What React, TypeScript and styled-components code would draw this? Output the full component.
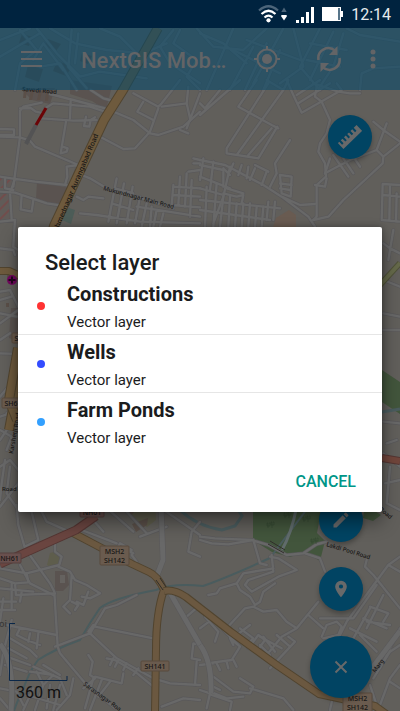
import React from "react";
import styled, { createGlobalStyle } from "styled-components";

const GlobalStyle = createGlobalStyle`
  * { box-sizing: border-box; }
  body { margin: 0; background: #615f5b; font-family: Roboto, "Liberation Sans", sans-serif; }
  button { font-family: inherit; cursor: pointer; }
`;

const Screen = styled.div`
  position: relative;
  display: flex;
  flex-direction: column;
  min-height: 100vh;
  overflow: hidden;
`;

const MapCanvas = styled.svg`
  position: absolute;
  inset: 0;
  width: 100%;
  height: 100%;
`;

const StatusBar = styled.div`
  position: relative;
  display: flex;
  align-items: center;
  justify-content: flex-end;
  gap: 8px;
  height: 28px;
  padding-right: 9px;
  background: #00233f;
  color: #e6eaed;
  font-size: 16px;
  line-height: 28px;

  time { padding-top: 2px; }
`;

const AppBar = styled.header`
  position: relative;
  display: flex;
  align-items: center;
  height: 62px;
  padding: 0 14px;
  background: rgba(3, 74, 107, 0.56);
  color: #636466;
`;

const BarTitle = styled.h1`
  flex: 1;
  min-width: 0;
  margin: 3px 0 0 33px;
  white-space: nowrap;
  font-size: 22px;
  line-height: 32px;
  font-weight: 500;
`;

const BarActions = styled.div`
  display: flex;
  align-items: center;
`;

const IconButton = styled.button<{ $width?: number }>`
  display: flex;
  align-items: center;
  justify-content: center;
  width: ${(p) => p.$width ?? 62}px;
  height: 40px;
  padding: 0;
  border: 0;
  background: none;
  color: inherit;
`;

const MapControls = styled.main`
  position: relative;
  flex: 1;
  display: flex;
  justify-content: space-between;
  align-items: stretch;
  padding: 25px 28px 13px 9px;
`;

const ScaleBar = styled.div`
  align-self: flex-end;
  margin-bottom: -6px;
  color: #111;
  font-size: 16px;
  line-height: 22px;

  svg { display: block; }
  span { display: block; padding-left: 7px; }
`;

const FabColumn = styled.div`
  display: flex;
  flex-direction: column;
  align-items: center;
  gap: 25px;
`;

const Fab = styled.button<{ $large?: boolean; $top?: boolean }>`
  display: flex;
  align-items: center;
  justify-content: center;
  width: ${(p) => (p.$large ? 62 : 44)}px;
  height: ${(p) => (p.$large ? 62 : 44)}px;
  padding: 0;
  border: 0;
  border-radius: 50%;
  background: #014463;
  color: #68696a;
  box-shadow: 0 3px 5px rgba(0, 0, 0, 0.28);
  ${(p) => p.$top && "align-self: flex-end; margin-bottom: auto;"}
`;

const Overlay = styled.div`
  position: absolute;
  inset: 28px 0 0;
  display: flex;
  align-items: center;
  padding: 0 18px;
`;

const Dialog = styled.section`
  width: 100%;
  padding-bottom: 13px;
  border-radius: 2px;
  background: #fff;
  color: #1b1c1d;
  box-shadow: 0 10px 18px rgba(0, 0, 0, 0.4), 0 0 6px rgba(0, 0, 0, 0.3);
`;

const DialogTitle = styled.h2`
  margin: 0;
  padding: 22px 27px 0;
  font-size: 22px;
  line-height: 28px;
  font-weight: 500;
`;

const LayerList = styled.ul`
  margin: 0;
  padding: 0;
  list-style: none;
`;

const LayerItem = styled.li`
  border-bottom: 1px solid #e6e6e6;
  &:last-child { border-bottom-color: transparent; }
`;

const LayerButton = styled.button`
  display: flex;
  align-items: center;
  width: 100%;
  height: 57px;
  padding: 0 19px;
  border: 0;
  background: none;
  color: inherit;
  text-align: left;
`;

const LayerDot = styled.span<{ $color: string }>`
  width: 8px;
  height: 8px;
  border-radius: 50%;
  background: ${(p) => p.$color};
`;

const LayerText = styled.span`
  display: flex;
  flex-direction: column;
  gap: 4px;
  margin-left: 22px;
  padding-top: 4px;
`;

const LayerName = styled.strong`
  font-size: 20px;
  line-height: 24px;
  font-weight: 700;
`;

const LayerKind = styled.span`
  font-size: 15px;
  line-height: 24px;
`;

const DialogActions = styled.div`
  display: flex;
  justify-content: flex-end;
  padding: 12px 18px 0 0;
`;

const CancelButton = styled.button`
  height: 36px;
  padding: 0 8px;
  border: 0;
  background: none;
  color: #009688;
  font-size: 16px;
  font-weight: 500;
`;

/* Street geometry, stored per map tile at three times screen scale. */
const tiles: { x: number; y: number; roads: string[] }[] = [
  {
    x: 0,
    y: 0,
    roads: [
      "M0 120L90 85 M0 170L120 100 M60 90L110 150L60 190L45 270 M110 85L170 160L240 230L300 215L440 235",
      "M150 85L225 130L320 150L430 160L500 130 M300 85L360 110L440 190 M215 90L205 200L260 265 M235 100L225 190",
      "M100 180L130 130L190 210 M120 200L180 190L230 270 M520 90L480 140L510 190L600 250 M540 90L520 130L590 180L560 230L600 270",
      "M590 85L640 140L730 150L800 85 M600 100L670 130L740 190 M700 85L620 270 M760 140L690 270 M800 130L735 270 M840 150L790 270",
      "M700 150L840 220 M740 120L900 180 M850 85L760 250 M880 85L910 200L840 250 M960 85L900 200L960 270 M1000 95L930 240 M1030 100L1000 200L960 260 M930 130L1040 150 M920 180L1020 200",
      "M1080 270L1085 220L1120 205L1200 200 M1040 85L1080 105L1200 125",
    ],
  },
  {
    x: 0,
    y: 80,
    roads: [
      "M125 68L70 80L60 92L60 170L40 320 M0 147L42 148L42 165L0 165 M0 170L60 172L90 182L105 200L235 255 M60 85L92 84L108 95L130 100",
      "M135 85L160 70L270 80L315 95 M150 42L220 60L315 85 M212 60L210 115 M125 115L220 122L290 120 M258 110L252 138L268 140L272 120L285 112",
      "M198 125L182 220L200 215L203 205L188 200 M235 255L200 260L202 290L195 315 M232 260L220 300 M245 285L270 295L320 325",
      "M272 30L310 55L330 60 M340 95L400 120L450 160L475 165L550 140L600 95 M400 40L475 80L485 70L540 0 M475 85L450 155L405 205L370 207L300 170",
      "M430 65L412 95L460 120 M485 80L560 70L570 115 M565 20L560 70 M600 40L560 145 M540 150L565 160",
      "M0 290L40 296L105 305L200 315 M0 335L45 338L140 370L205 380 M15 295L15 325L40 330 M65 345L62 388L95 395L100 360 M30 335L35 420 M230 350L250 360L265 350L310 355 M35 325L45 295",
      "M240 400L290 405L420 425L600 430 M350 295L325 425 M372 310L350 430 M398 320L380 430 M345 325L400 340 M335 370L400 390 M420 350L405 430 M440 370L425 440 M455 380L450 440",
      "M410 350L520 385 M410 380L600 410 M470 390L460 440 M490 400L480 440 M515 375L520 315 M540 290L535 375 M560 280L555 380 M600 270L565 275 M580 250L600 250 M580 235L600 240 M520 320L600 325 M520 345L600 350 M515 375L600 382 M575 300L570 410",
    ],
  },
  {
    x: 200,
    y: 80,
    roads: [
      "M120 0L0 105 M60 30L15 85L0 70 M170 0L115 80L215 135L235 145 M205 10L80 205L80 220L175 235L232 140 M250 30L110 225 M215 145L145 225 M200 0L250 30L265 0",
      "M260 0L280 45L305 98L425 30L410 10 M290 45L360 0 M295 70L390 10 M350 20L345 50L365 65L390 120L380 160L360 190L355 215L375 250L378 290L350 315L350 410L340 420",
      "M340 10L415 35L450 40L480 40 M270 180L225 250L230 280L210 320 M520 125L550 150L600 185 M560 130L530 210L550 230L600 190 M550 230L548 250L430 360L385 410L340 420 M530 210L450 240L375 280 M400 225L445 290 M430 235L460 280 M460 230L480 260",
      "M600 315L548 312L545 420L600 425 M548 345L600 350 M570 315L568 420 M590 340L588 425",
      "M0 240L75 255L190 315L245 350L300 375L345 372 M245 350L325 410L345 440 M0 255L70 270L70 320 M0 290L90 325 M0 325L70 345 M0 360L240 385 M0 390L210 420",
      "M10 235L0 300 M40 245L30 330 M90 260L70 350L40 430 M70 265L90 285 M100 250L90 275 M125 255L115 285 M145 260L140 295 M165 265L150 300 M200 275L185 315 M165 255L205 275 M20 320L15 440 M50 310L40 440",
      "M70 340L110 350L130 345L125 370 M80 325L130 340 M70 350L60 440 M90 350L85 440 M110 370L105 440 M130 370L125 440 M150 370L145 440 M170 380L165 440 M190 380L185 440 M205 365L200 420 M225 365L220 420",
      "M240 285L275 290L272 350L245 340L240 285 M240 310L275 315 M240 325L270 330 M345 315L375 320L380 295 M375 280L390 235",
    ],
  },
  {
    x: 0,
    y: 505,
    roads: [
      "M50 0L55 60L75 130L150 235L163 260L173 425L180 445L260 540L345 610 M75 125L115 105L90 0 M115 0L140 50L220 85 M165 115L165 140L185 155L178 180L80 205L0 190 M60 180L90 235L160 270",
      "M0 220L45 235L85 232L80 205 M0 250L100 260 M35 235L35 310 M45 235L48 270L165 265 M0 290L48 290 M0 315L45 315 M10 280L0 350 M65 260L60 290 M175 185L210 200L225 225L260 240L300 265L270 280L245 275 M215 210L210 285L190 305L210 325 M215 290L235 300L225 315 M265 260L250 300L230 290",
      "M165 425L270 385L315 310L350 300L410 270 M285 365L460 400 M270 385L350 460L460 520L510 535L600 540 M265 380L280 360 M20 360L170 390 M35 345L10 440L0 510 M60 370L50 390L80 405L120 420 M90 385L85 410 M115 385L110 430 M30 400L90 435L110 455 M25 430L80 460 M20 455L90 480 M15 480L80 500",
      "M90 500L160 510L130 540L110 500 M100 485L180 520L200 570 M130 480L180 510 M0 550L50 560L70 600 M0 580L30 615 M100 550L70 615 M130 540L105 615 M150 540L140 610 M180 540L160 615 M80 570L180 600 M220 520L210 570L170 615",
      "M265 450L278 470L270 510L285 520L250 550 M280 520L255 610 M305 525L270 615 M330 530L295 575 M285 515L365 535L370 505 M320 460L345 465L405 500L460 545 M330 480L340 460 M345 485L355 465 M370 495L380 475 M400 510L415 490",
      "M600 420L580 415L575 460L600 465 M560 335L600 300 M590 470L585 540 M485 605L550 580L600 585 M600 50L575 80L565 140L600 155 M470 0L600 90 M420 95L500 65 M395 135L360 115L345 145 M395 150L410 170 M370 130L400 145 M240 0L310 80 M245 75L350 115 M310 0L400 80 M380 20L440 85",
    ],
  },
  {
    x: 200,
    y: 505,
    roads: [
      "M0 95L45 100L155 105L205 120L260 150L310 145L350 118L380 110 M0 105L35 115L85 118L160 105 M160 105L180 175L200 180 M315 145L360 160L375 200 M215 150L220 200L145 225L135 240L155 260L235 215L290 195L235 160L210 155",
      "M220 190L130 205L110 235L120 255L150 275L165 300L180 290L190 260L225 235 M25 270L50 265L60 250L110 235 M80 370L135 310L160 305L190 320L230 315L260 350L290 370L355 290 M325 330L370 370 M290 370L245 395L200 450",
      "M600 155L565 180L440 350L400 430 M500 165L495 185L520 210L600 310 M565 180L600 200 M530 240L460 340L360 340 M550 270L500 370 M365 395L380 360L410 350L425 365L415 390L370 400 M450 370L530 410 M490 340L560 370 M510 305L565 325L550 350 M510 310L460 400 M480 390L530 440 M500 350L570 360",
      "M600 370L540 490 M600 420L570 440L520 520 M600 480L570 520L540 600 M570 530L600 550 M440 400L360 520 M265 395L285 410L210 490 M230 390L270 425 M180 395L245 430 M145 430L175 390L195 405L170 440 M190 395L225 440 M180 420L210 450",
      "M0 370L40 340 M15 335L55 380L45 410 M70 375L120 425L95 465L20 475 M120 425L90 400L100 420 M120 370L160 400L140 420L110 390L150 360 M50 475L60 495 M80 470L85 490 M100 465L110 485 M0 480L40 475",
      "M40 515L100 560L150 565L160 545L120 520 M150 550L250 580L280 615 M30 560L80 580L130 575 M35 570L95 590L90 615 M0 555L30 565L20 610 M30 540L60 555 M400 570L390 615 M510 540L530 600",
    ],
  },
  {
    x: 0,
    y: 200,
    roads: [
      "M0 65L45 60L40 140L55 150 M0 145L40 150L45 165 M0 275L30 270L55 320 M0 300L35 290 M0 340L50 350 M0 370L55 330 M0 420L30 400 M0 460L55 462 M0 590L25 560 M0 650L30 640L20 690L0 720 M20 640L50 620 M0 690L35 710L20 750 M0 800L30 780L55 810 M15 780L5 850L0 900 M30 800L20 880L55 930 M0 920L55 850",
      "M1150 130L1170 145L1200 160 M1180 90L1165 180 M1150 240L1200 260 M1150 340L1200 350 M1150 390L1200 390 M1150 665L1200 670 M1150 760L1200 800 M1160 730L1190 720 M1155 850L1200 840 M1170 800L1160 910L1200 930",
    ],
  },
];

const RoadLayer = ({ color, width }: { color: string; width: number }) => (
  <g fill="none" stroke={color} strokeWidth={width} strokeLinecap="round" strokeLinejoin="round">
    {tiles.map((t, i) => (
      <g key={i} transform={`translate(${t.x} ${t.y}) scale(0.33333)`}>
        {t.roads.map((d) => (
          <path key={d} d={d} />
        ))}
      </g>
    ))}
  </g>
);

const highways: { d: string; color: string; edge: string; width: number }[] = [
  { d: "M158 28L123 90L104 120L54 226L28 330L9 430", color: "#6e5a3d", edge: "#51442f", width: 9 },
  { d: "M18 348L9 400L17 420", color: "#6e5a3d", edge: "#51442f", width: 9 },
  { d: "M0 271L9 271L20 276", color: "#6e5a3d", edge: "#51442f", width: 7 },
  { d: "M73 533L132 564L149 572Q158 576 164 590Q156 612 156 650L155 711", color: "#6b5840", edge: "#51442f", width: 7 },
  { d: "M164 591Q174 589 186 597L231 632L278 666L319 694L375 706L400 724", color: "#6b5840", edge: "#51442f", width: 7 },
  { d: "M0 564L76 530L96 516", color: "#6a4540", edge: "#543633", width: 8 },
  { d: "M382 458L400 461", color: "#70453b", edge: "#543633", width: 7 },
  { d: "M380 285L400 263", color: "#65694a", edge: "#505239", width: 5 },
];

const streetLabels: { x: number; y: number; r: number; size: number; text: string }[] = [
  { x: 22, y: 91, r: 5, size: 6, text: "Savedi Road" },
  { x: 59, y: 228, r: -67, size: 7, text: "hmednagar Aurangabad Road" },
  { x: 103, y: 190, r: 15, size: 6, text: "Mukundnagar Main Road" },
  { x: 326, y: 546, r: 17, size: 6, text: "Lakdi Pool Road" },
  { x: 83, y: 685, r: 36, size: 6, text: "Sarasnagar Roa" },
  { x: 13, y: 454, r: -80, size: 6, text: "Karshetji Road" },
  { x: 2, y: 491, r: 0, size: 6, text: "Road" },
  { x: 375, y: 673, r: -52, size: 6, text: "Marg" },
  { x: 379, y: 510, r: 40, size: 6, text: "Road" },
];

const shields: { x: number; y: number; w: number; lines: string[]; red?: boolean }[] = [
  { x: 100, y: 546, w: 29, lines: ["MSH2", "SH142"] },
  { x: 343, y: 693, w: 29, lines: ["MSH2", "SH142"] },
  { x: 141, y: 661, w: 28, lines: ["SH141"] },
  { x: -2, y: 553, w: 23, lines: ["NH61"], red: true },
  { x: 80, y: 507, w: 24, lines: ["NH61"], red: true },
  { x: 2, y: 398, w: 22, lines: ["SH61"] },
  { x: 12, y: 333, w: 22, lines: ["SH61"] },
];

const CityMap = () => (
  <MapCanvas viewBox="0 0 400 711" preserveAspectRatio="xMidYMid slice" aria-hidden="true">
    <defs>
      <pattern id="hatch" width="7" height="7" patternUnits="userSpaceOnUse" patternTransform="rotate(45)">
        <rect width="7" height="7" fill="#615b58" />
        <rect width="2" height="7" fill="#714d4c" />
      </pattern>
    </defs>
    <rect width="400" height="711" fill="#615f5b" />
    <path d="M20 88L55 88L50 104L32 100Z M70 80L112 86L106 110L92 101L70 94Z M37 182L70 188L65 207L36 199Z M11 308L20 308V342L9 338Z" fill="#5a5350" />
    <path d="M55 571H67L69 585L63 591H55Z" fill="#5a5350" />
    <path d="M60 575h5v8h-5z" fill="#65625f" />
    <path d="M0 177L12 178V188L0 188Z M0 192L12 193L10 219L0 220Z" fill="url(#hatch)" />
    <path d="M66 207L75 210L71 224L62 220Z" fill="#4c5c57" />
    <path d="M272 230L276 218L289 210L296 215V230Z" fill="#695b51" />
    <path d="M253 505H322L317 533L325 541L320 561L305 552L290 557L272 552L253 540Z M365 505L381 515L373 521L363 518Z M382 370L400 382V414L382 402Z" fill="#42553c" />
    <path d="M50 553L58 551L60 562L52 568L47 565Z M122 505H155L156 520L147 527L137 520Z" fill="#5e5d4c" />
    <g fill="#5a4f48">
      <path d="M132 524L148 518L147 525L136 532Z M126 508L134 512L130 517Z M7 272h4v6H7z M6 303h3v4H6z" />
      <path d="M24 89l3 0l-1 9h-3z M31 90l3 0l-2 10h-3z M39 91l3 0l-2 9h-3z M46 93l3 0l-1 8h-3z" />
      <path d="M22 34l11 3l-4 9l-10-3z M48 39l13 5l-5 7l-12-5z M28 65l15 4l-4 13l-14-5z M57 61l15 5l-6 10l-13-5z M82 53l10 3l-4 8l-8-3z" />
    </g>
    <g fill="none" stroke="#4a5c5e" strokeWidth="2">
      <path d="M14 711Q19 696 22 693Q28 673 38 660Q55 649 80 640L90 623L100 608Q113 598 156 590Q172 583 203 586Q226 578 270 558L310 505" />
      <path d="M180 510Q197 526 222 530L235 526L242 516L236 506M382 412L400 409" strokeWidth="3" />
    </g>
    <RoadLayer color="#59585a" width={11} />
    <RoadLayer color="#686868" width={7} />
    <g fill="none" strokeLinejoin="round">
      <path d="M161 505L163 560L156 578M169 591L200 645M0 644Q15 662 11 711" stroke="#59585a" strokeWidth="6" />
      <path d="M161 505L163 560L156 578M169 591L200 645M0 644Q15 662 11 711" stroke="#686868" strokeWidth="5" />
      <path d="M200 645Q212 661 211 693M400 631L360 684" stroke="#59585a" strokeWidth="6" />
      <path d="M200 645Q212 661 211 693M400 631L360 684" stroke="#686868" strokeWidth="5" />
      <path d="M297 505Q292 532 282 550" stroke="#606b6b" strokeWidth="3" />
      {highways.map((h) => (
        <g key={h.d}>
          <path d={h.d} stroke={h.edge} strokeWidth={h.width + 1} />
          <path d={h.d} stroke={h.color} strokeWidth={h.width - 1} />
        </g>
      ))}
      <path d="M156 580L163 590M160 578L166 587M268 544L284 553M270 541L285 550" stroke="#302e2a" />
      <g stroke="#354831">
        {[[270, 525], [287, 515], [306, 519], [314, 541]].map(([x, y]) => (
          <path key={x} d={`M${x - 2} ${y + 3}v-5h-1v3h3v-3h-1M${x + 2} ${y + 3}v-6h-1v3h3v-3h-1`} strokeWidth="0.7" />
        ))}
      </g>
      <path d="M36 125L26 144" stroke="#535354" strokeWidth="4" />
      <path d="M46 108L36 125" stroke="#6b0407" strokeWidth="3" />
    </g>
    <g fontFamily='"Noto Sans", sans-serif' fontWeight="500" fill="#171615">
      {streetLabels.map((l) => (
        <text key={`${l.x}-${l.y}`} fontSize={l.size} transform={`translate(${l.x} ${l.y}) rotate(${l.r})`}>
          {l.text}
        </text>
      ))}
      <text x="-1" y="627" fontSize="9" fill="#3a3938">oi</text>
      {shields.map((s) => (
        <g key={`${s.x}-${s.y}`}>
          <rect
            x={s.x}
            y={s.y}
            width={s.w}
            height={s.lines.length * 9 + 1}
            rx="1"
            fill={s.red ? "#69504e" : "#6a5b4e"}
            stroke={s.red ? "#57403e" : "#594a3c"}
          />
          {s.lines.map((line, i) => (
            <text key={line} x={s.x + s.w / 2} y={s.y + 8 + i * 9} fontSize="7" textAnchor="middle">
              {line}
            </text>
          ))}
        </g>
      ))}
    </g>
    <circle cx="12" cy="280" r="5" fill="#73085f" />
    <path d="M12 276.500v7M8.500 280h7" stroke="#22051c" strokeWidth="2" />
  </MapCanvas>
);

const WifiIcon = () => (
  <svg width="30" height="18" viewBox="0 0 30 18" fill="none">
    <path d="M1 5.500Q10.500-3 20 5.500" stroke="#4c657a" strokeWidth="2.200" />
    <path d="M3.500 9Q10.500 2.500 17.500 9M6.500 12.500Q10.500 8.700 14.500 12.500" stroke="#fff" strokeWidth="2.200" />
    <circle cx="10.500" cy="15.300" r="2.100" fill="#fff" />
    <path d="M23.300 7L26 2.500L28.700 7Z" fill="#4c657a" />
    <path d="M23.300 10h5.400v1.500L26 15.500L23.300 11.500Z" fill="#fff" />
  </svg>
);

const SignalIcon = () => (
  <svg width="18" height="17" viewBox="0 0 18 17" fill="#fff">
    <path d="M0 14h3v3H0zM5 11h3v6H5zM10 6h3v11h-3zM15 1h3v16h-3z" />
  </svg>
);

const BatteryIcon = () => (
  <svg width="21" height="14" viewBox="0 0 21 14">
    <path d="M0 0H19V4H21V10H19V14H0Z" fill="#fff" />
    <path d="M16 1h2v12h-2z" fill="#58758a" />
  </svg>
);

const MenuIcon = () => (
  <svg width="21" height="16" viewBox="0 0 21 16" stroke="currentColor" strokeWidth="2">
    <path d="M0 1h21M0 8h21M0 15h21" />
  </svg>
);

const LocateIcon = () => (
  <svg width="26" height="26" viewBox="0 0 26 26" fill="none" stroke="currentColor" strokeWidth="2">
    <circle cx="13" cy="13" r="9.500" />
    <circle cx="13" cy="13" r="5" fill="currentColor" stroke="none" />
    <path d="M13 0v4M13 22v4M0 13h4M22 13h4" />
  </svg>
);

const SyncIcon = () => (
  <svg width="26" height="26" viewBox="0 0 26 26" fill="none" stroke="currentColor" strokeWidth="2.600">
    <path d="M2.500 14C1 4 12-1.500 19.500 5M23.500 12C25 22 14 27.500 6.500 21" />
    <path d="M21.500 0V9H13Z M4.500 26V17H13Z" fill="currentColor" stroke="none" />
  </svg>
);

const MoreIcon = () => (
  <svg width="6" height="20" viewBox="0 0 6 20" fill="currentColor">
    <circle cx="3" cy="3" r="2.500" />
    <circle cx="3" cy="10" r="2.500" />
    <circle cx="3" cy="17" r="2.500" />
  </svg>
);

const RulerIcon = () => (
  <svg width="24" height="24" viewBox="0 0 24 24" fill="currentColor">
    <path
      transform="rotate(-44 12 12)"
      d="M-1 8H1V12H3V8H5.500V12H7.500V8H10V12H12V8H14.500V12H16.500V8H19V12H21V8H25V16H-1Z"
    />
  </svg>
);

const PencilIcon = () => (
  <svg width="20" height="20" viewBox="0 0 24 24" fill="currentColor">
    <path d="M3 17.250V21h3.750L17.800 9.940l-3.750-3.750L3 17.250zM20.700 7.040a1 1 0 0 0 0-1.410l-2.340-2.340a1 1 0 0 0-1.410 0l-1.830 1.830 3.750 3.750 1.830-1.830z" />
  </svg>
);

const PinIcon = () => (
  <svg width="20" height="20" viewBox="0 0 24 24" fill="currentColor">
    <path d="M12 2a7 7 0 0 0-7 7c0 5.250 7 13 7 13s7-7.750 7-13a7 7 0 0 0-7-7zm0 9.500a2.500 2.500 0 1 1 0-5 2.500 2.500 0 0 1 0 5z" />
  </svg>
);

const CloseIcon = () => (
  <svg width="14" height="14" viewBox="0 0 14 14" stroke="currentColor" strokeWidth="2">
    <path d="M1.500 1.500L12.500 12.500M12.500 1.500L1.500 12.500" />
  </svg>
);

const layers = [
  { name: "Constructions", kind: "Vector layer", color: "#ff3333" },
  { name: "Wells", kind: "Vector layer", color: "#334cff" },
  { name: "Farm Ponds", kind: "Vector layer", color: "#33a0ff" },
];

export default function App() {
  return (
    <>
      <GlobalStyle />
      <Screen>
        <CityMap />
        <StatusBar>
          <WifiIcon />
          <SignalIcon />
          <BatteryIcon />
          <time>12:14</time>
        </StatusBar>
        <AppBar>
          <IconButton aria-label="Menu" $width={34}><MenuIcon /></IconButton>
          <BarTitle>NextGIS Mob…</BarTitle>
          <BarActions>
            <IconButton aria-label="Locate me"><LocateIcon /></IconButton>
            <IconButton aria-label="Refresh"><SyncIcon /></IconButton>
            <IconButton aria-label="More options" $width={26}><MoreIcon /></IconButton>
          </BarActions>
        </AppBar>
        <MapControls>
          <ScaleBar>
            <svg width="59" height="59" viewBox="0 0 59 59" fill="none" stroke="#0a2748">
              <path d="M6 0.500H0.500V57.500H58V53" />
            </svg>
            <span>360 m</span>
          </ScaleBar>
          <FabColumn>
            <Fab $top aria-label="Measure"><RulerIcon /></Fab>
            <Fab aria-label="Edit"><PencilIcon /></Fab>
            <Fab aria-label="Add point"><PinIcon /></Fab>
            <Fab $large aria-label="Close"><CloseIcon /></Fab>
          </FabColumn>
        </MapControls>
        <Overlay>
          <Dialog role="dialog" aria-modal="true" aria-labelledby="dialog-title">
            <DialogTitle id="dialog-title">Select layer</DialogTitle>
            <LayerList>
              {layers.map((l) => (
                <LayerItem key={l.name}>
                  <LayerButton>
                    <LayerDot $color={l.color} />
                    <LayerText>
                      <LayerName>{l.name}</LayerName>
                      <LayerKind>{l.kind}</LayerKind>
                    </LayerText>
                  </LayerButton>
                </LayerItem>
              ))}
            </LayerList>
            <DialogActions>
              <CancelButton>CANCEL</CancelButton>
            </DialogActions>
          </Dialog>
        </Overlay>
      </Screen>
    </>
  );
}
